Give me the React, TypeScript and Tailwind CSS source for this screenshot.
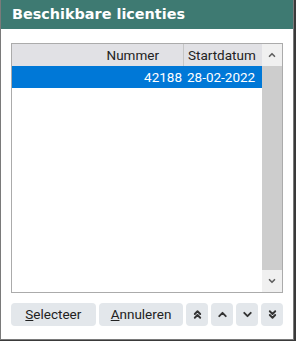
import { ChevronUp, ChevronDown, ChevronsUp, ChevronsDown } from "lucide-react";

const rows = [{ nummer: "42188", start: "28-02-2022" }];

export default function App() {
  return (
    <div className="flex h-[341px] w-[296px] bg-[#3a3a3a] font-['Roboto',sans-serif]">
      <div className="flex h-[340px] w-[294px] flex-col border-x border-b border-[#7a7a7a] bg-white">
        {/* title bar */}
        <div className="flex h-[29px] items-center bg-[#3e7a72] pl-[11px]">
          <span className="font-['DejaVu_Sans',sans-serif] text-[14.4px] font-bold text-white">Beschikbare licenties</span>
        </div>

        {/* list */}
        <div className="mx-[10px] mt-[14px] flex h-[250px] border border-[#ababab]">
          <div className="flex flex-1 flex-col">
            <div className="flex h-[22px] bg-[#e1e1e5] text-[13.5px] text-[#222]">
              <div className="flex w-[172px] items-center justify-end border-r border-[#c6c6c6] pr-[24px]">Nummer</div>
              <div className="flex flex-1 items-center pl-[4px]">Startdatum</div>
            </div>
            {rows.map((r) => (
              <div key={r.nummer} className="flex h-[22px] bg-[#0078d7] text-[13.5px] text-white">
                <div className="flex w-[172px] items-center justify-end pr-[2px]">{r.nummer}</div>
                <div className="flex flex-1 items-center pl-[3px]">{r.start}</div>
              </div>
            ))}
          </div>
          <div className="flex w-[20px] flex-col bg-[#cdcdcd]">
            <div className="flex h-[22px] items-center justify-center bg-[#f0f0f0]">
              <ChevronUp size={10} strokeWidth={4} className="text-[#606060]" />
            </div>
            <div className="flex-1" />
            <div className="flex h-[22px] items-center justify-center bg-[#f0f0f0]">
              <ChevronDown size={10} strokeWidth={4} className="text-[#606060]" />
            </div>
          </div>
        </div>

        {/* buttons */}
        <div className="mx-[10px] mt-[10px] flex gap-[3px] text-[13.5px] text-[#222]">
          <button className="flex h-[23px] w-[85px] items-center justify-center rounded-[4px] bg-[#e3e7eb]">
            <span><span className="underline">S</span>electeer</span>
          </button>
          <button className="flex h-[23px] w-[85px] items-center justify-center rounded-[4px] bg-[#e3e7eb]">
            <span><span className="underline">A</span>nnuleren</span>
          </button>
          <button className="flex h-[23px] w-[22px] items-center justify-center rounded-[4px] bg-[#e3e7eb]">
            <ChevronsUp size={13} strokeWidth={3.5} className="text-[#333]" />
          </button>
          <button className="flex h-[23px] w-[22px] items-center justify-center rounded-[4px] bg-[#e3e7eb]">
            <ChevronUp size={13} strokeWidth={3.5} className="text-[#333]" />
          </button>
          <button className="flex h-[23px] w-[22px] items-center justify-center rounded-[4px] bg-[#e3e7eb]">
            <ChevronDown size={13} strokeWidth={3.5} className="text-[#333]" />
          </button>
          <button className="flex h-[23px] w-[22px] items-center justify-center rounded-[4px] bg-[#e3e7eb]">
            <ChevronsDown size={13} strokeWidth={3.5} className="text-[#333]" />
          </button>
        </div>
      </div>
    </div>
  );
}
